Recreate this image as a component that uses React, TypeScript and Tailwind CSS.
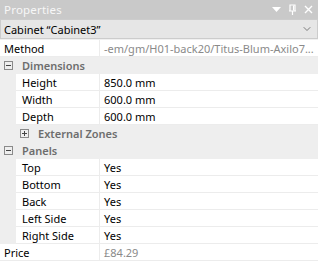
import { ChevronDown } from "lucide-react";

interface Row {
  kind: "prop" | "group";
  label: string;
  value?: string;
  level: number;
  open?: boolean;
  muted?: boolean;
}

const rows: Row[] = [
  { kind: "prop", label: "Method", value: "-em/gm/H01-back20/Titus-Blum-Axilo7...", level: 0, muted: true },
  { kind: "group", label: "Dimensions", level: 0, open: true },
  { kind: "prop", label: "Height", value: "850.0 mm", level: 1 },
  { kind: "prop", label: "Width", value: "600.0 mm", level: 1 },
  { kind: "prop", label: "Depth", value: "600.0 mm", level: 1 },
  { kind: "group", label: "External Zones", level: 1, open: false },
  { kind: "group", label: "Panels", level: 0, open: true },
  { kind: "prop", label: "Top", value: "Yes", level: 1 },
  { kind: "prop", label: "Bottom", value: "Yes", level: 1 },
  { kind: "prop", label: "Back", value: "Yes", level: 1 },
  { kind: "prop", label: "Left Side", value: "Yes", level: 1 },
  { kind: "prop", label: "Right Side", value: "Yes", level: 1 },
  { kind: "prop", label: "Price", value: "£84.29", level: 0, muted: true },
];

function Toggle({ open }: { open?: boolean }) {
  return (
    <svg width="9" height="9" viewBox="0 0 9 9" className="shrink-0">
      <rect x="0.5" y="0.5" width="8" height="8" fill="none" stroke="#8a8a8a" />
      <line x1="2" y1="4.5" x2="7" y2="4.5" stroke="#444" />
      {!open && <line x1="4.5" y1="2" x2="4.5" y2="7" stroke="#444" />}
    </svg>
  );
}

export default function App() {
  return (
    <div className="w-[318px] h-[261px] overflow-hidden bg-[#f0f0f0] text-[11px] leading-none font-['Noto_Sans',sans-serif] text-black">
      {/* Title bar */}
      <div className="h-[19px] bg-[#c9c9c9] flex items-center justify-between pl-[4px] pr-[5px]">
        <span className="text-[#f7f7f7] text-[11.5px] tracking-[0.2px]">Properties</span>
        <div className="flex items-center gap-[7px] text-white">
          <svg width="9" height="6" viewBox="0 0 9 6">
            <path d="M0 0h9L4.5 5z" fill="#fff" />
          </svg>
          <svg width="9" height="11" viewBox="0 0 9 11">
            <path d="M2 1h5v6H2zM1 7h7M4.5 7v4" fill="none" stroke="#fff" strokeWidth="1.2" />
            <path d="M5.5 1.5v5" stroke="#fff" />
          </svg>
          <svg width="9" height="9" viewBox="0 0 9 9">
            <path d="M1 1l7 7M8 1l-7 7" stroke="#fff" strokeWidth="1.4" />
          </svg>
        </div>
      </div>

      {/* Object selector */}
      <div className="h-[20px] bg-[#e6e6e6] border border-[#cccccc] flex items-center justify-between pl-[3px] pr-[4px]">
        <span>Cabinet “Cabinet3”</span>
        <ChevronDown className="w-[12px] h-[12px] text-[#555]" strokeWidth={1.5} />
      </div>

      {/* Property grid */}
      <div className="mt-[1px] bg-white">
        {rows.map((row, i) =>
          row.kind === "group" ? (
            <div key={i} className="h-[17px] bg-[#eeeeee] flex items-center">
              <div className={row.level === 0 ? "w-[4px]" : "w-[20px]"} />
              <Toggle open={row.open} />
              <span className="ml-[9px] font-semibold text-[#6d6d6d]">{row.label}</span>
            </div>
          ) : (
            <div key={i} className="h-[17px] flex">
              {row.level > 0 && <div className="w-[16px] bg-[#eeeeee] shrink-0" />}
              <div className="flex-1 flex border-b border-[#ececec]">
                <div
                  className={
                    row.level > 0
                      ? "w-[84px] shrink-0 pl-[6px] flex items-center border-r border-[#ececec]"
                      : "w-[100px] shrink-0 pl-[4px] flex items-center border-r border-[#ececec]"
                  }
                >
                  {row.label}
                </div>
                <div
                  className={
                    row.muted
                      ? "flex-1 pl-[4px] flex items-center text-[#8a8a8a] whitespace-nowrap overflow-hidden"
                      : "flex-1 pl-[4px] flex items-center whitespace-nowrap overflow-hidden"
                  }
                >
                  {row.value}
                </div>
              </div>
            </div>
          )
        )}
      </div>
    </div>
  );
}
